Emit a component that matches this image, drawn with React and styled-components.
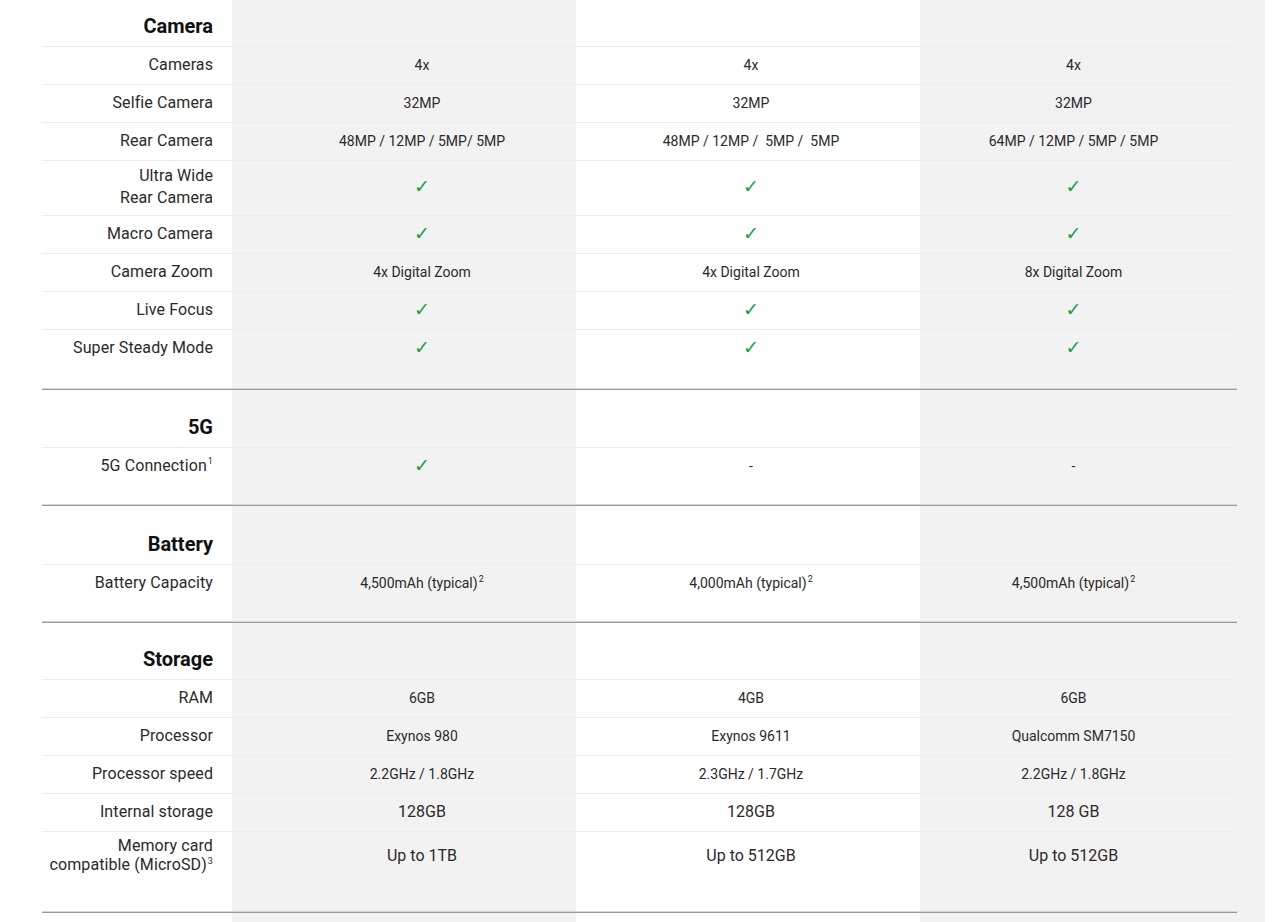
import React from 'react';
import styled, { createGlobalStyle } from 'styled-components';

const GlobalStyle = createGlobalStyle`
  html, body {
    margin: 0;
    padding: 0;
    background: #fff;
  }
  body {
    font-family: Roboto, "Liberation Sans", Arial, sans-serif;
    color: #222;
    -webkit-font-smoothing: antialiased;
  }
`;

const GREY = '#f2f2f2';

const Page = styled.div`
  width: 1280px;
  min-height: 922px;
  box-sizing: border-box;
  padding: 0 43px 0 42px;
  background: linear-gradient(
    to right,
    #fff 0 232px,
    ${GREY} 232px 576px,
    #fff 576px 920px,
    ${GREY} 920px 1265px,
    #fff 1265px
  );
`;

const Section = styled.section`
  padding-top: ${(p) => p.$pt}px;
  padding-bottom: ${(p) => p.$pb}px;
  border-bottom: 1px solid #9a9a9a;
  box-shadow: 0 -1px 0 #d6d6d6 inset;
`;

const Row = styled.div`
  display: grid;
  grid-template-columns: 190px 380px 278px 1fr;
  align-items: center;
  min-height: 38px;
  box-sizing: border-box;
  padding: 4px 0 6px;
  border-top: 1px solid #ececec;
  line-height: ${(p) => (p.$tight ? 19 : 22)}px;
`;

const HeadingRow = styled.div`
  display: grid;
  grid-template-columns: 190px 1fr;
  height: 37px;
  box-sizing: border-box;
  padding-bottom: 3px;
  align-items: center;
`;

const Heading = styled.h2`
  margin: 0;
  padding-right: 19px;
  text-align: right;
  font-size: 20px;
  font-weight: 700;
  color: #111;
`;

const Label = styled.div`
  padding-right: 19px;
  text-align: right;
  font-size: 16px;
  color: #2a2a2a;
  letter-spacing: 0.1px;
`;

const Value = styled.div`
  text-align: center;
  padding-left: ${(p) => p.$shift || 0}px;
  font-size: ${(p) => (p.$big ? 16 : 14)}px;
  color: #2a2a2a;
  white-space: pre;
`;

const Sup = styled.sup`
  font-size: 9px;
  line-height: 0;
  vertical-align: super;
  margin-left: 1px;
`;

const Check = styled.span`
  font-family: "DejaVu Sans", sans-serif;
  font-size: 19px;
  color: #1f9d4b;
  font-weight: 700;
`;

const Y = <Check>✓</Check>;

const sections = [
  {
    title: 'Camera',
    pt: 9,
    pb: 22,
    rows: [
      { label: 'Cameras', values: ['4x', '4x', '4x'] },
      { label: 'Selfie Camera', values: ['32MP', '32MP', '32MP'] },
      { label: 'Rear Camera', values: ['48MP / 12MP / 5MP/ 5MP', '48MP / 12MP /  5MP /  5MP', '64MP / 12MP / 5MP / 5MP'] },
      { label: <>Ultra Wide<br />Rear Camera</>, values: [Y, Y, Y] },
      { label: 'Macro Camera', values: [Y, Y, Y] },
      { label: 'Camera Zoom', values: ['4x Digital Zoom', '4x Digital Zoom', '8x Digital Zoom'] },
      { label: 'Live Focus', values: [Y, Y, Y] },
      { label: 'Super Steady Mode', values: [Y, Y, Y] },
    ],
  },
  {
    title: '5G',
    pt: 20,
    pb: 20,
    rows: [
      { label: <>5G Connection<Sup>1</Sup></>, values: [Y, '-', '-'] },
    ],
  },
  {
    title: 'Battery',
    pt: 21,
    pb: 20,
    rows: [
      {
        label: 'Battery Capacity',
        values: [
          <>4,500mAh (typical)<Sup>2</Sup></>,
          <>4,000mAh (typical)<Sup>2</Sup></>,
          <>4,500mAh (typical)<Sup>2</Sup></>,
        ],
      },
    ],
  },
  {
    title: 'Storage',
    pt: 19,
    pb: 32,
    rows: [
      { label: 'RAM', values: ['6GB', '4GB', '6GB'] },
      { label: 'Processor', values: ['Exynos 980', 'Exynos 9611', 'Qualcomm SM7150'] },
      { label: 'Processor speed', values: ['2.2GHz / 1.8GHz', '2.3GHz / 1.7GHz', '2.2GHz / 1.8GHz'] },
      { label: 'Internal storage', values: ['128GB', '128GB', '128 GB'], big: true },
      {
        label: <>Memory card<br />compatible (MicroSD)<Sup>3</Sup></>,
        values: ['Up to 1TB', 'Up to 512GB', 'Up to 512GB'],
        big: true,
        tight: true,
      },
    ],
  },
];

const shifts = [0, 0, 20];

const App = () => {
  return (
    <>
      <GlobalStyle />
      <Page>
        {sections.map((s) => (
          <Section key={s.title} $pt={s.pt} $pb={s.pb}>
            <HeadingRow>
              <Heading>{s.title}</Heading>
            </HeadingRow>
            {s.rows.map((r, i) => (
              <Row key={i} $tight={r.tight}>
                <Label>{r.label}</Label>
                {r.values.map((v, j) => (
                  <Value key={j} $shift={shifts[j]} $big={r.big}>
                    {v}
                  </Value>
                ))}
              </Row>
            ))}
          </Section>
        ))}
      </Page>
    </>
  );
};

export default App;
